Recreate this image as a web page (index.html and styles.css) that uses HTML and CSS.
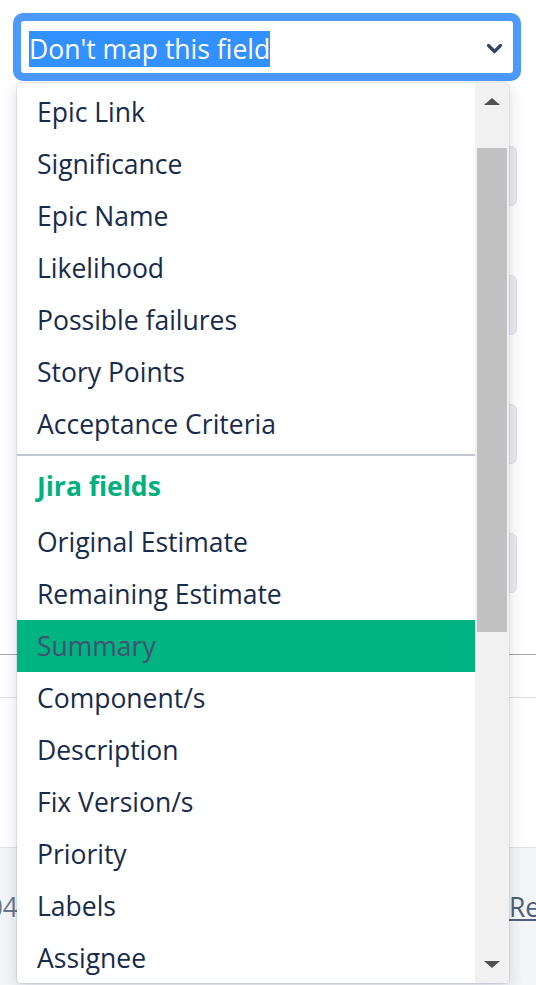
FILE: index.html
```html
<!DOCTYPE html>
<html lang="en">
<head>
    <meta charset="UTF-8">
    <meta name="viewport" content="width=device-width, initial-scale=1.0">
    <title>Field mapping</title>
    <link rel="stylesheet" href="styles.css">
</head>
<body>
    <div class="page">
        <div class="select-ring">
            <div class="select-box">
                <span class="select-value">Don't map this field</span>
                <svg class="chevron" width="17" height="11" viewBox="0 0 17 11">
                    <polyline points="2.5,2.5 8.5,8.5 14.5,2.5" fill="none" stroke="#344563" stroke-width="3.2" stroke-linecap="round" stroke-linejoin="round"/>
                </svg>
            </div>
        </div>

        <div class="fields">
            <div class="field-box"></div>
            <div class="field-box"></div>
            <div class="field-box"></div>
            <div class="field-box"></div>
        </div>

        <div class="divider-strong"></div>
        <div class="divider-light"></div>

        <div class="footer">
            <div class="footer-version"><span>v9.4.04</span></div>
            <a class="footer-link" href="#">Report</a>
        </div>
    </div>

    <div class="dropdown">
        <ul class="options">
            <li class="option">Epic Link</li>
            <li class="option">Significance</li>
            <li class="option">Epic Name</li>
            <li class="option">Likelihood</li>
            <li class="option">Possible failures</li>
            <li class="option">Story Points</li>
            <li class="option">Acceptance Criteria</li>
            <li class="separator"></li>
            <li class="group-label">Jira fields</li>
            <li class="option">Original Estimate</li>
            <li class="option">Remaining Estimate</li>
            <li class="option active">Summary</li>
            <li class="option">Component/s</li>
            <li class="option">Description</li>
            <li class="option">Fix Version/s</li>
            <li class="option">Priority</li>
            <li class="option">Labels</li>
            <li class="option">Assignee</li>
        </ul>
        <div class="scrollbar">
            <div class="sb-btn"><span class="arrow-up"></span></div>
            <div class="sb-thumb"></div>
            <div class="sb-fill"></div>
            <div class="sb-btn"><span class="arrow-down"></span></div>
        </div>
    </div>
</body>
</html>
```

FILE: styles.css
```css
html, body {
    margin: 0;
    padding: 0;
    height: 100%;
    overflow: hidden;
}
body {
    font-family: "Open Sans", "Noto Sans", sans-serif;
    font-size: 26.5px;
    color: #172b4d;
    background-color: #fff;
    position: relative;
}
.page {
    display: flex;
    flex-direction: column;
    height: 100%;
}

/* focused select */
.select-ring {
    margin: 13px 15px 0 13px;
    padding: 8px;
    background-color: #4c9aff;
    border-radius: 10px;
}
.select-box {
    height: 52px;
    background-color: #fff;
    border-radius: 3px;
    display: flex;
    align-items: center;
    justify-content: space-between;
    padding: 0 10px 0 8px;
    box-sizing: border-box;
}
.select-value {
    background-color: #3390ff;
    color: #fff;
    margin-top: 3px;
}
.chevron {
    display: block;
    margin-top: 2px;
}

/* page content behind the menu */
.fields {
    margin-top: 65px;
    display: flex;
    flex-direction: column;
    gap: 69px;
    align-items: flex-end;
    padding-right: 19px;
}
.field-box {
    width: 240px;
    height: 60px;
    box-sizing: border-box;
    background-color: #ebecf0;
    border: 1px solid #e1e3e8;
    border-radius: 6px;
}
.divider-strong {
    margin-top: 61px;
    border-top: 1px solid #a9a9a9;
}
.divider-light {
    margin-top: 42px;
    border-top: 1px solid #dfe1e6;
}
.footer {
    margin-top: 149px;
    flex: 1;
    background-color: #f4f5f7;
    border-top: 1px solid #dfe1e6;
    display: flex;
    align-items: flex-start;
    padding-top: 41px;
    white-space: nowrap;
}
.footer-version {
    flex: 0 0 18px;
    min-width: 0;
    overflow: hidden;
    display: flex;
    justify-content: flex-end;
    color: #6b778c;
}
.footer-version span {
    flex-shrink: 0;
}
.footer-link {
    margin-left: 491px;
    color: #505f79;
    text-decoration: underline;
}

/* open menu */
.dropdown {
    position: absolute;
    left: 17px;
    top: 83px;
    width: 492px;
    height: 900px;
    background-color: #fff;
    border-radius: 4px;
    box-shadow: 0 0 0 1px rgba(9, 30, 66, 0.08), 0 4px 16px rgba(9, 30, 66, 0.16);
    display: flex;
    overflow: hidden;
}
.options {
    list-style: none;
    margin: 0;
    padding: 3px 0 0 0;
    flex: 1;
    overflow: hidden;
}
.option {
    height: 52px;
    display: flex;
    align-items: center;
    padding-left: 20px;
    white-space: nowrap;
}
.option.active {
    background-color: #00b383;
    color: #42526e;
}
.separator {
    margin-top: 4px;
    height: 2px;
    background-color: #c1c7d0;
}
.group-label {
    height: 60px;
    display: flex;
    align-items: center;
    padding-left: 20px;
    font-weight: 700;
    color: #00b07e;
}
.scrollbar {
    width: 34px;
    background-color: #f1f1f1;
    display: flex;
    flex-direction: column;
}
.sb-btn {
    height: 37px;
    display: flex;
    align-items: center;
    justify-content: center;
}
.sb-thumb {
    margin: 28px 2px 0 2px;
    height: 484px;
    background-color: #c1c1c1;
}
.sb-fill {
    flex: 1;
}
.arrow-up {
    width: 0;
    height: 0;
    border-left: 8px solid transparent;
    border-right: 8px solid transparent;
    border-bottom: 7px solid #505050;
}
.arrow-down {
    width: 0;
    height: 0;
    border-left: 8px solid transparent;
    border-right: 8px solid transparent;
    border-top: 7px solid #505050;
}
```
